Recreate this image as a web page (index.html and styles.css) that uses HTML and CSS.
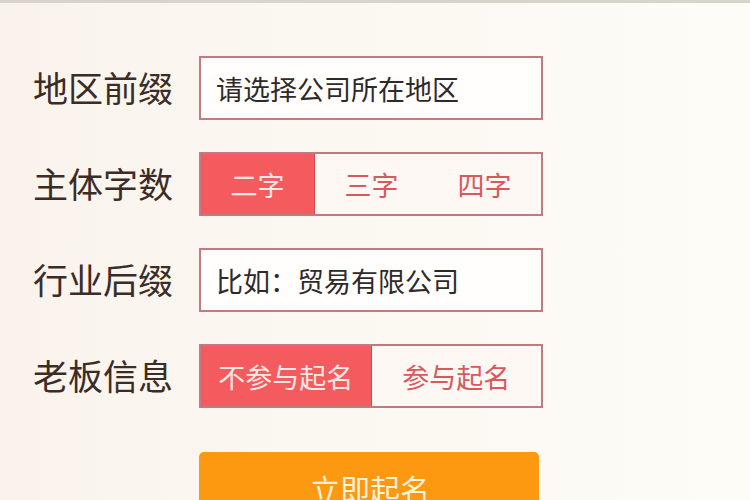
FILE: index.html
```html
<!DOCTYPE html>
<html lang="zh-CN">
<head>
<meta charset="utf-8">
<title>公司起名</title>
<link rel="stylesheet" href="styles.css">
</head>
<body>
<div class="page">
  <form class="form">
    <div class="row">
      <span class="label">地区前缀</span>
      <div class="field input">请选择公司所在地区</div>
    </div>
    <div class="row">
      <span class="label">主体字数</span>
      <div class="field seg">
        <span class="opt active">二字</span>
        <span class="opt">三字</span>
        <span class="opt">四字</span>
      </div>
    </div>
    <div class="row">
      <span class="label">行业后缀</span>
      <div class="field input">比如：贸易有限公司</div>
    </div>
    <div class="row">
      <span class="label">老板信息</span>
      <div class="field seg">
        <span class="opt active">不参与起名</span>
        <span class="opt">参与起名</span>
      </div>
    </div>
    <div class="row row-btn">
      <span class="label"></span>
      <button type="button" class="submit">立即起名</button>
    </div>
  </form>
</div>
</body>
</html>
```

FILE: styles.css
```css
* { box-sizing: border-box; }
html, body { margin: 0; padding: 0; }
body {
  width: 750px;
  height: 500px;
  overflow: hidden;
  font-family: "Noto Sans CJK SC", "Noto Sans", sans-serif;
  background: linear-gradient(90deg, #f9f3ec 0%, #fbf7f1 40%, #fdfcf7 100%);
}
.page {
  height: 500px;
  border-top: 3px solid #d9d4cb;
  padding-top: 53px;
}
.form {
  display: flex;
  flex-direction: column;
  gap: 32px;
  padding-left: 33px;
}
.row {
  display: flex;
  align-items: center;
  height: 64px;
}
.label {
  width: 166px;
  flex: none;
  font-size: 35px;
  color: #3b2c26;
  line-height: 1;
  letter-spacing: 0;
  margin-top: -4px;
}
.field {
  width: 344px;
  height: 64px;
  border: 2px solid #c27a82;
}
.input {
  background: #fffefd;
  display: flex;
  align-items: center;
  padding-left: 15px;
  font-size: 27px;
  color: #2e2a2a;
}
.seg {
  display: flex;
  background: #fdf8f3;
}
.opt {
  flex: 1;
  display: flex;
  align-items: center;
  justify-content: center;
  font-size: 27px;
  color: #d9585e;
}
.opt.active {
  background: #f45b5f;
  color: #fde9e3;
  border-right: 1px solid #d8474d;
}
.row-btn {
  margin-top: 12px;
  height: 72px;
  align-items: flex-start;
}
.submit {
  width: 340px;
  height: 72px;
  border: none;
  border-radius: 5px;
  background: #fd9811;
  color: #fff3dc;
  font-family: "Noto Sans CJK SC", "Noto Sans", sans-serif;
  font-size: 30px;
  padding: 0;
  padding-left: 2px;
}
```
